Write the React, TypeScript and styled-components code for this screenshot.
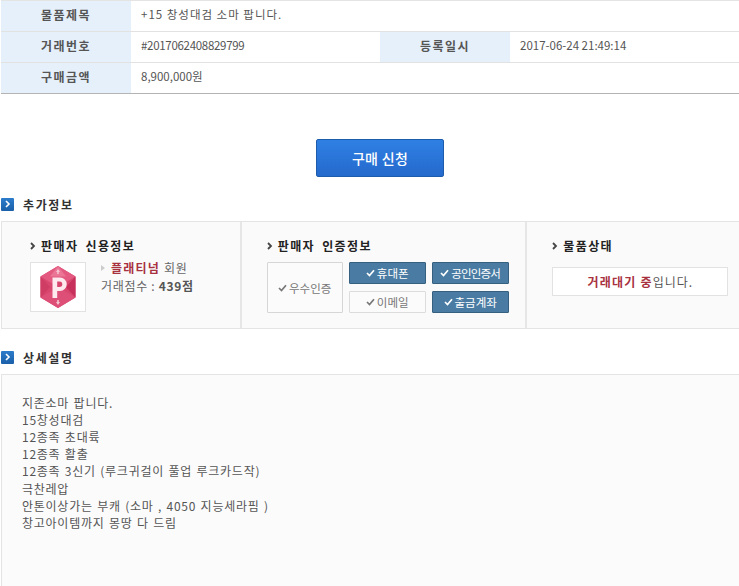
import { createGlobalStyle } from 'styled-components'
import styled from 'styled-components'

const GlobalStyle = createGlobalStyle`
	html, body {
		margin: 0;
		padding: 0;
		background: #fff;
		overflow: hidden;
	}
	body {
		font-family: "Noto Sans CJK KR", "Noto Sans", sans-serif;
		color: #555;
	}
`

const DESCRIPTION = [
	'지존소마 팝니다.',
	'15창성대검',
	'12종족 초대륙',
	'12종족 활출',
	'12종족 3신기 (루크귀걸이 풀업 루크카드작)',
	'극찬레압',
	'안톤이상가는 부캐 (소마 , 4050 지능세라핌 )',
	'창고아이템까지 몽땅 다 드림',
]

function SectionIcon() {
	return (
		<IconBox>
			<svg width="6" height="8" viewBox="0 0 6 8">
				<path d="M1 1l3 3-3 3" fill="none" stroke="#fff" strokeWidth="1.6" />
			</svg>
		</IconBox>
	)
}

function Chevron() {
	return (
		<svg width="6" height="8" viewBox="0 0 6 8">
			<path d="M1 1l3 3-3 3" fill="none" stroke="#444" strokeWidth="1.8" />
		</svg>
	)
}

function Check() {
	return (
		<svg width="9" height="8" viewBox="0 0 9 8">
			<path d="M1 4l2.5 2.5L8 1.2" fill="none" stroke="currentColor" strokeWidth="1.7" />
		</svg>
	)
}

function GradeLogo() {
	return (
		<svg width="36" height="42" viewBox="0 0 36 42">
			<path d="M18 0l17.5 10.5v21L18 42 .5 31.5v-21z" fill="#d8466e" />
			<path d="M18 0l17.5 10.5L18 21 .5 10.5z" fill="#e4597f" />
			<path d="M.5 10.5L10 21 .5 31.500z" fill="#cf3c64" />
			<path d="M35.500 10.500L26 21l9.500 10.500z" fill="#c7305a" />
			<path d="M18 42L.5 31.500 18 21l17.500 10.500z" fill="#dd4f77" />
			<path d="M18 0l8 10.500H10z" fill="#ea7595" />
			<path d="M18 3l2 3h-1.200v2h-1.600V6H16zM18 39l2-3h-1.200v-2h-1.600v2H16z" fill="#f6c3d1" />
			<path d="M12.500 11.500h7.500a6.200 6.200 0 0 1 0 13.500h-2.800v7h-4.700z" fill="#fde9ee" />
			<path d="M17.200 15.500h2.300a2.500 2.500 0 0 1 0 5.500h-2.300z" fill="#d8466e" />
		</svg>
	)
}

export default function App() {
	return (
		<Page>
			<GlobalStyle />
			<InfoTable>
				<InfoRow>
					<InfoLabel>물품제목</InfoLabel>
					<InfoValue $spacing={1}>+15 창성대검 소마 팝니다.</InfoValue>
				</InfoRow>
				<InfoRow>
					<InfoLabel>거래번호</InfoLabel>
					<InfoValue $width={249} $spacing={-0.3}>
						#2017062408829799
					</InfoValue>
					<InfoLabel>등록일시</InfoLabel>
					<InfoValue>2017-06-24 21:49:14</InfoValue>
				</InfoRow>
				<InfoRow>
					<InfoLabel>구매금액</InfoLabel>
					<InfoValue>8,900,000원</InfoValue>
				</InfoRow>
			</InfoTable>

			<ButtonArea>
				<BuyButton>구매 신청</BuyButton>
			</ButtonArea>

			<SectionTitle>
				<SectionIcon />
				추가정보
			</SectionTitle>
			<Panels>
				<Panel $width={240} $pad={28}>
					<PanelTitle>
						<Chevron />
						판매자 신용정보
					</PanelTitle>
					<CreditBody>
						<LogoBox>
							<GradeLogo />
						</LogoBox>
						<CreditText>
							<GradeLine>
								<GradeMark />
								<RedText>플래티넘</RedText> 회원
							</GradeLine>
							<div>
								거래점수 : <Score>439점</Score>
							</div>
						</CreditText>
					</CreditBody>
				</Panel>
				<Panel $width={286}>
					<PanelTitle>
						<Chevron />
						판매자 인증정보
					</PanelTitle>
					<BadgeGrid>
						<TallBadge>
							<Check />
							우수인증
						</TallBadge>
						<Badge $on>
							<Check />
							휴대폰
						</Badge>
						<Badge $on $tight>
							<Check />
							공인인증서
						</Badge>
						<Badge>
							<Check />
							이메일
						</Badge>
						<Badge $on>
							<Check />
							출금계좌
						</Badge>
					</BadgeGrid>
				</Panel>
				<Panel $width={212}>
					<PanelTitle>
						<Chevron />
						물품상태
					</PanelTitle>
					<StatusBox>
						<RedText>거래대기 중</RedText>입니다.
					</StatusBox>
				</Panel>
			</Panels>

			<SectionTitle>
				<SectionIcon />
				상세설명
			</SectionTitle>
			<Description>
				{DESCRIPTION.map((line) => (
					<div key={line}>{line}</div>
				))}
			</Description>
		</Page>
	)
}

const Page = styled.div`
	width: 739px;
	height: 586px;
	overflow: hidden;
`

const InfoTable = styled.div`
	border-top: 1px solid #e4e4e4;
	border-bottom: 1px solid #b4b4b4;
	margin-left: 1px;
`

const InfoRow = styled.div`
	display: flex;
	height: 30px;
	& + & {
		border-top: 1px solid #e2e2e2;
	}
`

const InfoLabel = styled.div`
	width: 130px;
	flex-shrink: 0;
	box-sizing: border-box;
	padding-bottom: 4px;
	background: #e6f0fb;
	display: flex;
	align-items: center;
	justify-content: center;
	font-size: 12px;
	font-weight: 700;
	letter-spacing: 1.4px;
	color: #555;
`

const InfoValue = styled.div<{ $width?: number; $spacing?: number }>`
	${({ $width }) => ($width ? `width: ${$width}px;` : 'flex: 1;')}
	letter-spacing: ${({ $spacing }) => $spacing ?? 0}px;
	padding: 0 0 4px 10px;
	box-sizing: border-box;
	display: flex;
	align-items: center;
	font-size: 11.5px;
	color: #555;
`

const ButtonArea = styled.div`
	display: flex;
	justify-content: center;
	box-sizing: border-box;
	padding: 45px 0 0 21px;
	height: 97px;
`

const BuyButton = styled.button`
	width: 128px;
	height: 38px;
	border: 1px solid #1d5cab;
	border-radius: 2px;
	background: linear-gradient(#2f80e4, #2569cc);
	color: #fff;
	font-family: inherit;
	font-size: 14px;
	font-weight: 500;
	letter-spacing: 0.3px;
	padding: 0;
`

const SectionTitle = styled.h2`
	display: flex;
	align-items: center;
	gap: 9px;
	margin: 0 0 4px;
	padding-left: 1px;
	height: 26px;
	font-size: 12px;
	font-weight: 700;
	letter-spacing: 1.6px;
	color: #333;
`

const IconBox = styled.span`
	width: 13px;
	height: 13px;
	background: linear-gradient(#2c7ccb, #1a5fa8);
	border-radius: 1px;
	display: flex;
	align-items: center;
	justify-content: center;
`

const Panels = styled.div`
	display: flex;
	height: 106px;
	margin: 0 0 15px 1px;
	border-top: 1px solid #e4e4e4;
	border-bottom: 1px solid #e4e4e4;
	border-left: 1px solid #e4e4e4;
	background: #fafafa;
`

const Panel = styled.div<{ $width: number; $pad?: number }>`
	width: ${({ $width }) => $width}px;
	box-sizing: border-box;
	padding: 15px 0 0 ${({ $pad }) => $pad ?? 25}px;
	border-right: 2px solid #e6e6e6;
	&:last-child {
		border-right: none;
	}
`

const PanelTitle = styled.h3`
	display: flex;
	align-items: center;
	gap: 5px;
	margin: 0 0 8px;
	height: 17px;
	font-size: 12px;
	font-weight: 700;
	letter-spacing: 1.4px;
	word-spacing: 3px;
	color: #222;
`

const CreditBody = styled.div`
	display: flex;
	gap: 15px;
`

const LogoBox = styled.div`
	width: 56px;
	height: 50px;
	box-sizing: border-box;
	border: 1px solid #e2e2e2;
	background: #fff;
	display: flex;
	align-items: center;
	justify-content: center;
`

const CreditText = styled.div`
	margin-top: -3px;
	font-size: 12px;
	line-height: 18px;
	letter-spacing: 0.7px;
	color: #666;
`

const GradeLine = styled.div`
	display: flex;
	align-items: center;
	gap: 4px;
`

const GradeMark = styled.i`
	width: 0;
	height: 0;
	margin-right: 2px;
	border-left: 4px solid #ccc;
	border-top: 3px solid transparent;
	border-bottom: 3px solid transparent;
`

const RedText = styled.strong`
	color: #a8323f;
	font-weight: 700;
	letter-spacing: 1.2px;
`

const Score = styled.strong`
	color: #555;
	font-weight: 700;
`

const BadgeGrid = styled.div`
	display: grid;
	grid-template-columns: 76px 77px 77px;
	grid-template-rows: 22px 22px;
	gap: 7px 6px;
	font-size: 11.5px;
`

const Badge = styled.div<{ $on?: boolean; $tight?: boolean }>`
	display: flex;
	align-items: center;
	justify-content: center;
	gap: 2px;
	box-sizing: border-box;
	border-radius: 1px;
	border: 1px solid ${({ $on }) => ($on ? '#35607f' : '#dcdcdc')};
	background: ${({ $on }) => ($on ? '#4a7ca3' : '#fbfbfb')};
	color: ${({ $on }) => ($on ? '#fff' : '#777')};
	letter-spacing: ${({ $tight }) => ($tight ? '-0.8px' : '0')};
`

const TallBadge = styled(Badge)`
	grid-row: span 2;
	border-color: #d6d6d6;
`

const StatusBox = styled.div`
	width: 176px;
	height: 29px;
	margin-top: 13px;
	box-sizing: border-box;
	border: 1px solid #e2e2e2;
	background: #fff;
	display: flex;
	align-items: center;
	justify-content: center;
	font-size: 12px;
	letter-spacing: 1px;
	color: #555;
`

const Description = styled.div`
	height: 212px;
	box-sizing: border-box;
	margin-left: 1px;
	padding: 18.500px 20px;
	border-top: 1px solid #e4e4e4;
	border-left: 1px solid #e4e4e4;
	background: #fbfbfb;
	font-size: 12px;
	line-height: 17.2px;
	letter-spacing: 0.75px;
	word-spacing: 1px;
	color: #555;
`
